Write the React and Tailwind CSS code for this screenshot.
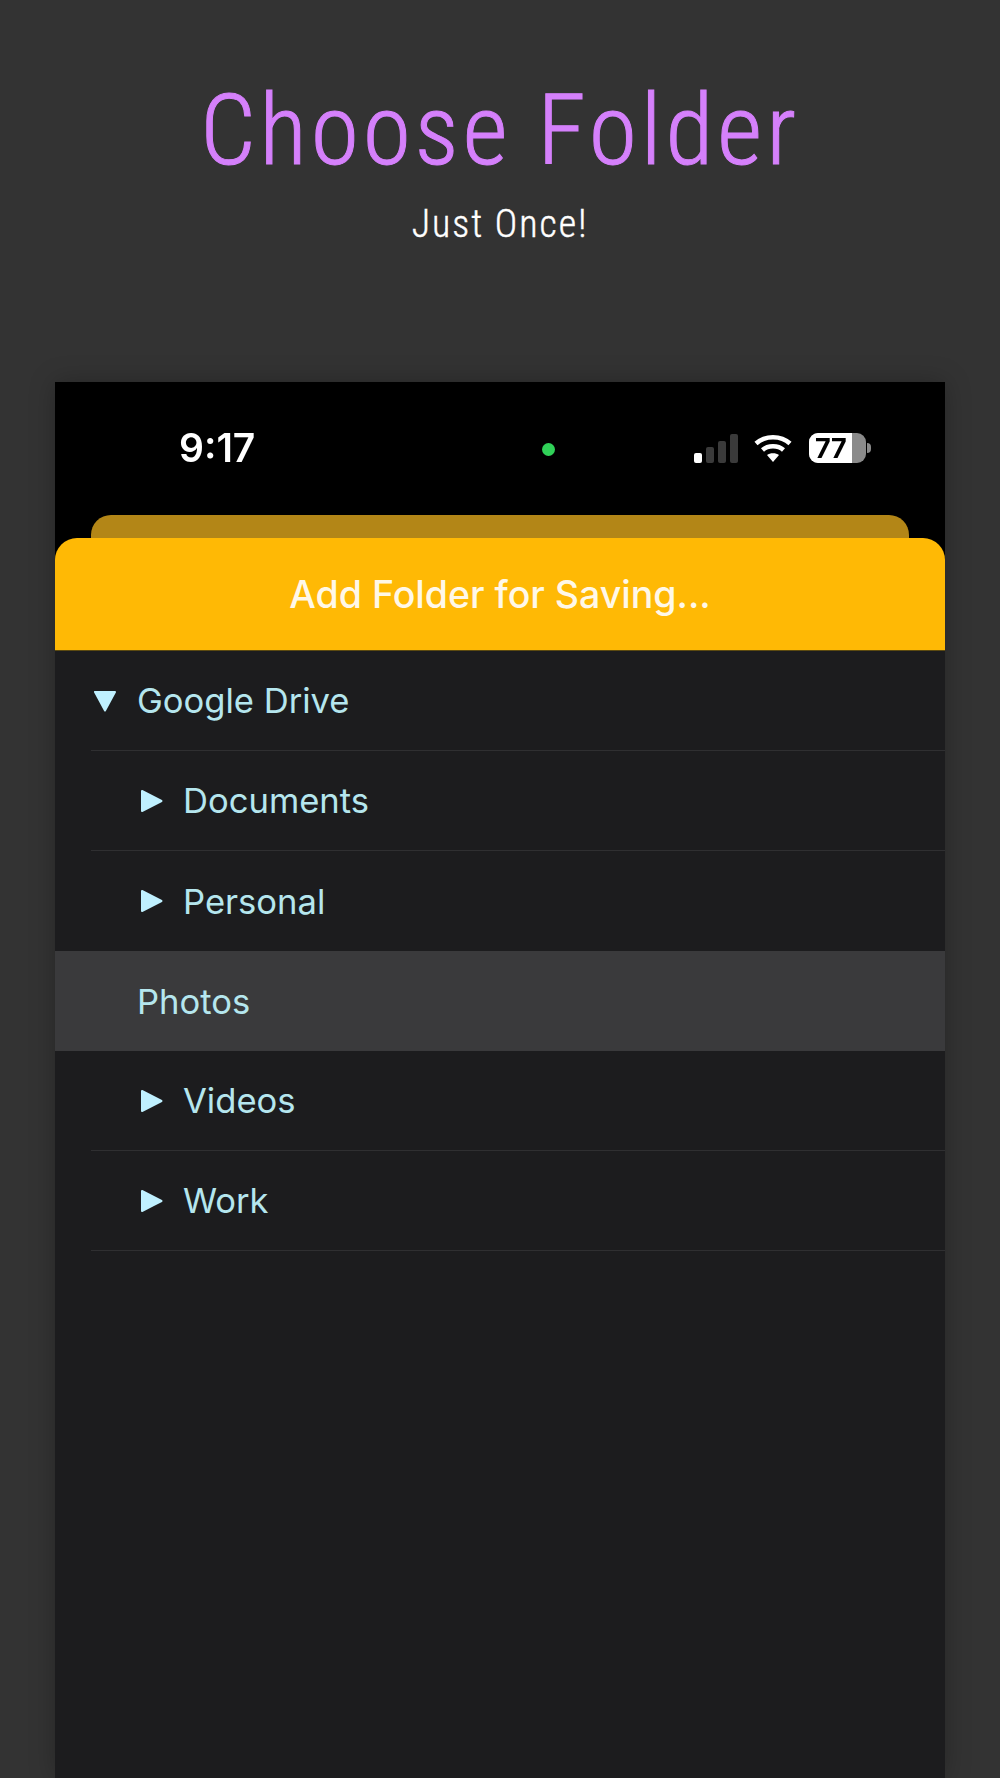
import React from "react";

const Row = ({ label, level = 1, open, arrow = true, selected, border = true }) => (
  <div className={`h-[100px] flex pl-[36px] ${selected ? "bg-[#3a3a3c]" : ""}`}>
    <div className={`flex-1 flex items-center ${border ? "border-b border-[#2f2f31]" : ""} ${selected ? "pl-[46px]" : level === 0 ? "pl-[2px]" : "pl-[49px]"}`}>
      {arrow && (
        <svg width="24" height="24" viewBox="0 0 24 24" className={`shrink-0 ${level === 0 ? "mr-[20px]" : "mr-[19px]"}`}>
          {open ? (
            <path d="M2 3 H22 L12 21.5 Z" fill="#bff0ff" stroke="#bff0ff" strokeWidth="2" strokeLinejoin="round" />
          ) : (
            <path d="M2 2 V22 L21.5 12 Z" fill="#bff0ff" stroke="#bff0ff" strokeWidth="2" strokeLinejoin="round" />
          )}
        </svg>
      )}
      <span className="font-['Inter',sans-serif] text-[34.6px] text-[#b5e6ee] leading-none">{label}</span>
    </div>
  </div>
);

export default function App() {
  return (
    <div className="h-[1778px] overflow-hidden bg-[#333333] flex flex-col items-center">
      <h1 className="mt-[82px] font-['Liberation_Sans_Narrow','Roboto_Condensed','Roboto',sans-serif] font-light text-[98px] leading-[98px] tracking-[4px] text-[#d580fb] [-webkit-text-stroke:1px_#d580fb]">
        Choose Folder
      </h1>
      <p className="mt-[19px] font-['Liberation_Sans_Narrow','Roboto_Condensed','Roboto',sans-serif] font-light text-[38px] leading-[50px] tracking-[2px] text-white [-webkit-text-stroke:0.4px_#ffffff]">
        Just Once!
      </p>
      <div className="mt-[133px] w-[890px] flex-1 flex flex-col bg-black shadow-[0_0_24px_rgba(0,0,0,0.25)] overflow-hidden">
        <div className="blur-[0.5px] flex flex-col flex-1">
          <div className="h-[133px] flex items-start pt-[43px] pl-[124px]">
            <span className="font-['Inter',sans-serif] font-semibold text-[39px] leading-[46px] text-white">9:17</span>
            <div className="ml-[287px] mt-[18px] w-[13px] h-[13px] rounded-full bg-[#30d158]" />
            <svg width="44" height="29" viewBox="0 0 44 29" className="ml-[139px] mt-[9px]">
              <rect x="0" y="19" width="8" height="10" rx="2" fill="#fff" />
              <rect x="12" y="13" width="8" height="16" rx="2" fill="#3a3a3a" />
              <rect x="24" y="7" width="8" height="22" rx="2" fill="#3a3a3a" />
              <rect x="36" y="0" width="8" height="29" rx="2" fill="#3a3a3a" />
            </svg>
            <svg width="38" height="28" viewBox="0 0 38 28" className="ml-[16px] mt-[9px]">
              <g fill="none" stroke="#fff" strokeWidth="4.5">
                <path d="M2 9.5 C11 1 27 1 36 9.5" />
                <path d="M8.5 16 C14 11 24 11 29.5 16" />
              </g>
              <path d="M13 21 C16 18.5 22 18.5 25 21 L19 28 Z" fill="#fff" />
            </svg>
            <div className="ml-[17px] mt-[8px] flex items-center">
              <div className="w-[57px] h-[30px] rounded-[9px] overflow-hidden flex bg-[#8a8a8a]">
                <div className="w-[43px] bg-white flex items-center justify-center font-['Inter',sans-serif] font-bold text-[27px] leading-none text-black">77</div>
              </div>
              <div className="ml-[1px] w-[4px] h-[10px] rounded-r-full bg-[#8a8a8a]" />
            </div>
          </div>
          <div className="mx-[36px] h-[24px] rounded-t-[20px] bg-[#b38617]" />
          <div className="h-[113px] -mt-px pt-[3px] rounded-t-[22px] bg-[#ffb905] border-b border-[#5c4a10] flex items-center justify-center font-['Inter',sans-serif] font-medium text-[37.5px] text-[#fff8e8]">
            Add Folder for Saving...
          </div>
          <div className="flex-1 bg-[#1c1c1e]">
            <Row label="Google Drive" level={0} open />
            <Row label="Documents" />
            <Row label="Personal" border={false} />
            <Row label="Photos" selected arrow={false} border={false} />
            <Row label="Videos" />
            <Row label="Work" />
          </div>
        </div>
      </div>
    </div>
  );
}
